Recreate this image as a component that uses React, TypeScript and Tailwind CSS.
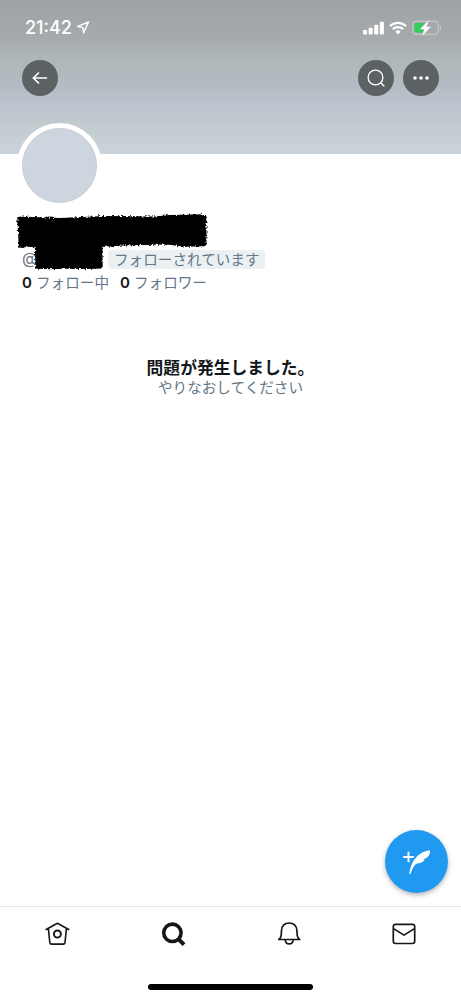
import type { ReactNode } from 'react';

function RoundButton({ children }: { children: ReactNode }) {
  return (
    <button className="flex h-9 w-9 items-center justify-center rounded-full bg-[#5c6163] text-white">
      {children}
    </button>
  );
}

function StatusBar() {
  return (
    <div className="flex h-[54px] items-center justify-between pl-[25px] pr-[19px] pt-px text-white">
      <div className="flex items-center gap-[5px]">
        <span className="w-[47px] whitespace-nowrap text-[18px] font-medium leading-none">21:42</span>
        <svg width="13" height="13" viewBox="0 0 13 13" fill="none" stroke="currentColor" strokeWidth="1.4" strokeLinejoin="round">
          <path d="M11.6 .9 .8 5.5l5 1.1.8 5.2z" />
        </svg>
      </div>
      <div className="flex items-center gap-[5px]">
        <svg width="21" height="14" viewBox="0 0 21 14" fill="currentColor">
          <rect x="0" y="9" width="4.1" height="4.6" rx="1" />
          <rect x="5.6" y="6.7" width="4.1" height="6.9" rx="1" />
          <rect x="11.2" y="3.8" width="4.1" height="9.8" rx="1" />
          <rect x="16.8" y=".8" width="4.1" height="12.8" rx="1" />
        </svg>
        <svg width="18" height="14" viewBox="0 0 18 14" fill="none" stroke="currentColor" strokeWidth="2.3">
          <path d="M1 5.1a11.6 11.6 0 0 1 16 0M3.9 8.2a7.4 7.4 0 0 1 10.2 0" />
          <path d="M9 13.4 6.3 10.7a3.8 3.8 0 0 1 5.4 0z" fill="currentColor" stroke="none" />
        </svg>
        <svg width="30" height="16" viewBox="0 0 30 16" fill="none">
          <rect x=".9" y="1.3" width="25.4" height="13" rx="3.6" stroke="#c9cdd0" strokeWidth="1.1" />
          <path d="M27.8 5.6v4.8c1.5-.5 1.9-4.1 0-4.8z" fill="#c9cdd0" />
          <path d="M4.3 3h8.4L7.6 9.4h4L10.4 12.6H4.3A1.8 1.8 0 0 1 2.5 10.8v-6A1.8 1.8 0 0 1 4.3 3z" fill="#30d158" />
          <path d="M16.2 1 8.8 8.9h4l-2.1 6 7.6-7.8h-4.1z" fill="white" stroke="white" strokeWidth=".6" strokeLinejoin="round" />
        </svg>
      </div>
    </div>
  );
}

function Scribble() {
  return (
    <svg className="absolute -left-2 -top-[7px]" width="200" height="68" viewBox="14 208 200 68">
      <defs>
        <filter id="rough" x="-5%" y="-10%" width="110%" height="120%">
          <feTurbulence type="fractalNoise" baseFrequency=".45" numOctaves="2" seed="4" />
          <feDisplacementMap in="SourceGraphic" scale="4" xChannelSelector="R" yChannelSelector="G" />
          <feGaussianBlur stdDeviation=".45" />
        </filter>
      </defs>
      <path
        filter="url(#rough)"
        d="M17.3 217 20 215.5 59 217l46-2 50 .5 15-1.4 34-.8 2.5 1.5v29l-2 1.5-18 .4-20-2.1-45 .8-19 1.5.2 19-1.5 2.5-18.7.6-17-.2-18 .5-12-.8-.7-21.3-7-.5-5 1.2-4-.5z"
      />
    </svg>
  );
}

function Profile() {
  return (
    <section className="relative h-[82px] pl-[22px] text-[14.6px] leading-[22px] text-[#657786]">
      <div className="h-[32px]" />
      <div className="flex h-[22px] items-center">
        <span className="-mt-[3px] w-[86px] text-[16px]">@</span>
        <span className="flex h-[19px] items-center rounded-[4px] bg-[#ebf1f2] pl-[6px] pr-[5px] pt-px">
          フォローされています
        </span>
      </div>
      <div className="mt-[2px] flex h-[22px] items-center gap-[11px]">
        <span className="flex gap-[4px]">
          <b className="w-[10px] text-[15px] font-semibold text-[#14171a]">0</b>フォロー中
        </span>
        <span className="flex gap-[4px]">
          <b className="w-[10px] text-[15px] font-semibold text-[#14171a]">0</b>フォロワー
        </span>
      </div>
      <div className="absolute left-[22px] top-0">
        <Scribble />
      </div>
    </section>
  );
}

function TabBar() {
  return (
    <nav className="flex h-[93px] flex-col border-t border-[#e1e8ea] text-[#14171a]">
      <div className="flex h-[54px] items-center justify-between pl-[45px] pr-[44px]">
        <svg width="26" height="26" viewBox="0 0 26 26" fill="none" stroke="currentColor" strokeWidth="1.6" strokeLinecap="round" strokeLinejoin="round">
          <path d="M1.1 8.5 12.4 2.3l11.3 6.2M3.4 7.6l1.4 14a1.8 1.8 0 0 0 1.8 1.5h11.6a1.8 1.8 0 0 0 1.8-1.5l1.4-14" />
          <circle cx="12.4" cy="13" r="3.5" strokeWidth="1.9" />
        </svg>
        <svg width="26" height="26" viewBox="0 0 26 26" fill="none" stroke="currentColor" strokeWidth="3.6">
          <circle cx="12.4" cy="11.8" r="8.7" />
          <path d="m18 17.6 6 6" strokeWidth="4" />
        </svg>
        <svg width="26" height="26" viewBox="0 0 26 26" fill="none" stroke="currentColor" strokeWidth="1.7" strokeLinejoin="round">
          <path d="M2.8 18.5c2-1.2 2.3-2.6 2.4-4.2l.3-4.8C5.9 4.9 8.9 2 13.2 2s7.3 2.9 7.7 7.5l.3 4.8c.1 1.6.5 3 2.5 4.2zM9.2 18.7c.2 2.7 1.8 4.2 4 4.2s3.8-1.5 4-4.2" />
        </svg>
        <svg width="26" height="26" viewBox="0 0 26 26" fill="none" stroke="currentColor" strokeWidth="1.7" strokeLinejoin="round">
          <rect x="2.3" y="3.4" width="21.4" height="19.1" rx="2.2" />
          <path d="m2.5 7.6 10.5 6.5 10.5-6.5" />
        </svg>
      </div>
      <div className="mx-auto mt-[23px] h-[6px] w-[165px] rounded-full bg-black" />
    </nav>
  );
}

export default function App() {
  return (
    <main
      lang="ja"
      className="relative flex h-[999px] w-[461px] flex-col overflow-hidden bg-white font-['Inter','Noto_Sans_CJK_JP',sans-serif]"
    >
      <header className="h-[154px] shrink-0 bg-[linear-gradient(180deg,#9da2a6_0px,#a6abae_40px,#afb7b9_60px,#b3bcc3_85px,#bdc6ce_108px,#c0c9cc_120px,#cbd4db_154px)]">
        <StatusBar />
        <div className="flex items-center justify-between pl-[22px] pr-[22px] pt-[6px]">
          <RoundButton>
            <svg width="16" height="14" viewBox="0 0 16 14" fill="none" stroke="currentColor" strokeWidth="1.7" strokeLinecap="round" strokeLinejoin="round">
              <path d="M14.4 7H1.3m5.2-5L1.3 7l5.2 5" />
            </svg>
          </RoundButton>
          <div className="flex gap-[9px]">
            <RoundButton>
              <svg width="18" height="18" viewBox="0 0 18 18" fill="none" stroke="currentColor" strokeWidth="1.3" strokeLinecap="round">
                <circle cx="8.5" cy="8.5" r="7.4" />
                <path d="m13.8 13.8 3.2 3.2" />
              </svg>
            </RoundButton>
            <RoundButton>
              <svg width="16" height="4" viewBox="0 0 16 4" fill="currentColor">
                <circle cx="2" cy="2" r="1.8" />
                <circle cx="8" cy="2" r="1.8" />
                <circle cx="14" cy="2" r="1.8" />
              </svg>
            </RoundButton>
          </div>
        </div>
      </header>
      <div className="relative ml-[17px] -mt-[31px] h-[85px] w-[85px] shrink-0 rounded-full bg-white p-[5px]">
        <div className="h-[75px] w-[75px] rounded-full border border-[#c5ced4] bg-[#cdd5de]" />
      </div>
      <div className="h-[8px] shrink-0" />
      <Profile />
      <section className="mt-[60px] flex flex-1 flex-col items-center">
        <h1 className="text-[16.8px] font-bold leading-[20px] text-[#14171a]">問題が発生しました。</h1>
        <p className="text-[14.6px] leading-[20px] text-[#657786]">やりなおしてください</p>
      </section>
      <TabBar />
      <button className="absolute left-[385px] top-[830px] flex h-[63px] w-[63px] items-center justify-center rounded-full bg-[#1f9af0] text-white shadow-[0_2px_5px_rgba(0,0,0,0.3)]">
        <svg width="29" height="26" viewBox="0 0 29 26">
          <path d="M6.5 2.7v10.6M1.2 8H11.8" fill="none" stroke="currentColor" strokeWidth="1.9" />
          <path d="M7.2 25C8 18.5 10.2 12.6 14.4 8 18.4 3.6 23 1.7 28 1.2c.3 2.6-.6 5.1-2.5 6.9-1.2 1.2-2.5 1.8-4.2 2l1.4.8c-1.8 2.4-4.2 3.2-7.8 3.5C12.3 15.6 10.2 19.4 8.5 25z" fill="currentColor" />
        </svg>
      </button>
    </main>
  );
}
